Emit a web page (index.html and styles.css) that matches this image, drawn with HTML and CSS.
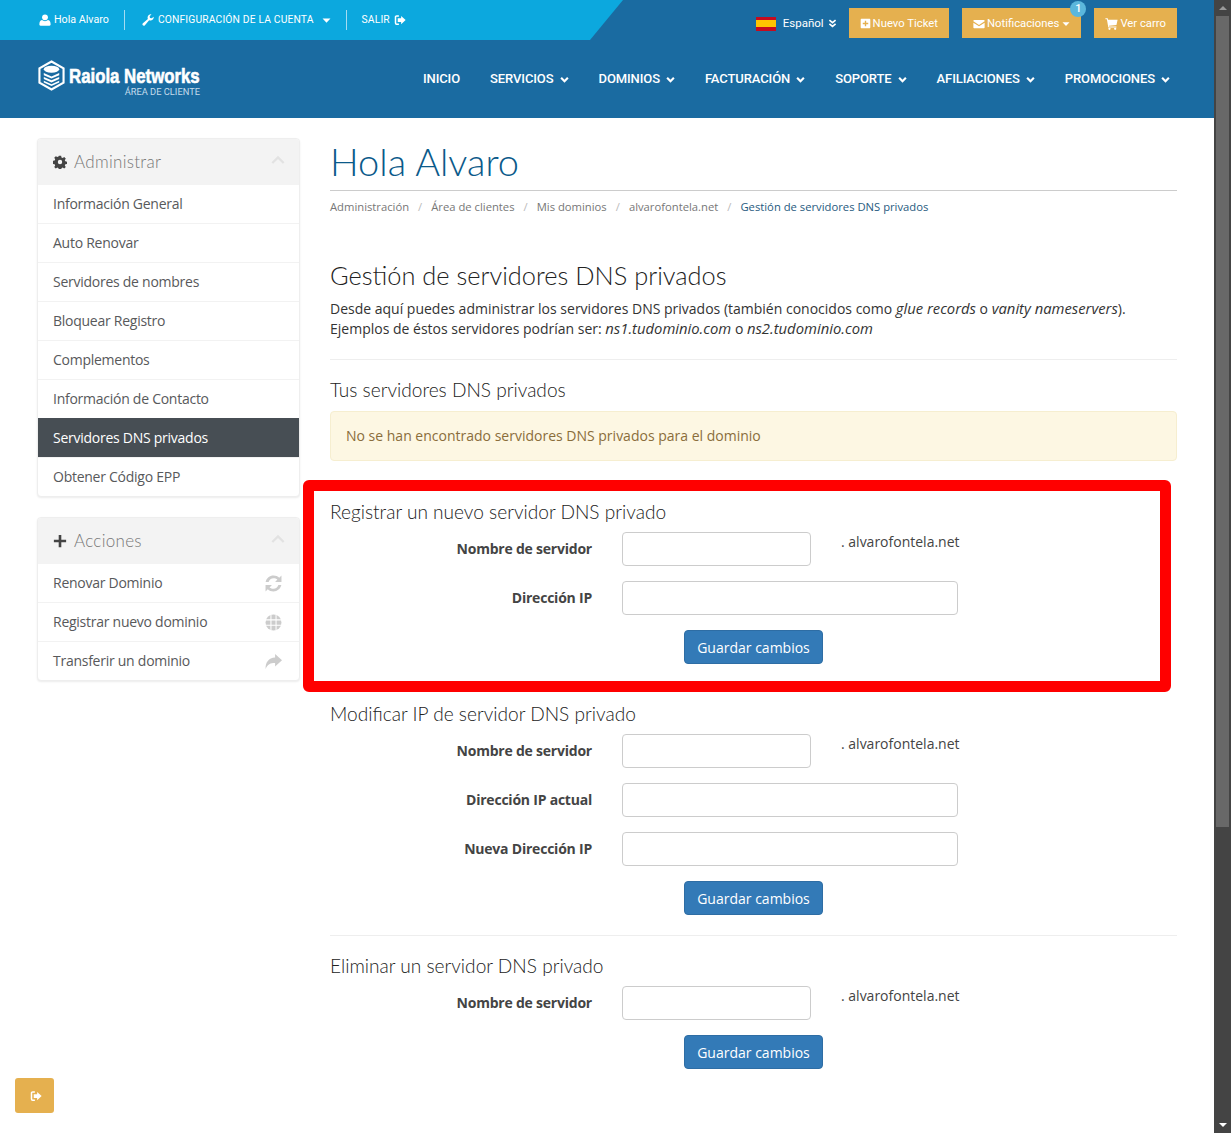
FILE: index.html
```html
<!DOCTYPE html>
<html lang="es">
<head>
    <meta charset="UTF-8">
    <meta name="viewport" content="width=device-width, initial-scale=1.0">
    <title>Gestión de servidores DNS privados</title>
    <link rel="stylesheet" href="styles.css">
</head>
<body>
    <svg class="icon-defs" aria-hidden="true">
        <symbol id="i-user" viewBox="0 0 16 16"><circle cx="8" cy="4.400" r="3.900"/><path d="M2 15.500c-1 0-1.500-.6-1.500-1.500 0-3 .8-6 3.500-6 1 1 2.500 1.500 4 1.500s3-.5 4-1.500c2.700 0 3.500 3 3.500 6 0 .9-.5 1.500-1.500 1.500z"/></symbol>
        <symbol id="i-wrench" viewBox="0 0 16 16"><path d="M15.600 3.700c.3 2.300-1.300 4.700-3.700 5-1 .1-1.700-.1-2.400-.4L3.900 14.900c-.8.900-2.100.9-2.800.1-.8-.8-.7-2 .1-2.800L7.800 6.600c-.3-.8-.4-1.600-.3-2.500C7.900 1.700 10.300 0 12.700.4l-2.500 2.500.4 2.400 2.400.4z"/></symbol>
        <symbol id="i-signout" viewBox="0 0 16 16"><path d="M6.500 2.500H3.500C2.700 2.500 2 3.200 2 4v8c0 .8.7 1.500 1.500 1.500h3" fill="none" stroke="currentColor" stroke-width="2"/><path d="M9.500 2.500 15.500 8l-6 5.500V10.500H5v-5h4.500z"/></symbol>
        <symbol id="i-chevron" viewBox="0 0 16 16"><path d="M2 5 8 11l6-6" fill="none" stroke="currentColor" stroke-width="3.800"/></symbol>
        <symbol id="i-double" viewBox="0 0 16 16"><path d="M2.500 2 8 6.500 13.500 2M2.500 8.500 8 13l5.500-4.500" fill="none" stroke="currentColor" stroke-width="3"/></symbol>
        <symbol id="i-caret" viewBox="0 0 16 16"><path d="M1 4.500h14L8 12z"/></symbol>
        <symbol id="i-plus-square" viewBox="0 0 16 16"><path fill-rule="evenodd" d="M2.500 1h11C14.400 1 15 1.600 15 2.500v11c0 .9-.6 1.500-1.500 1.500h-11C1.600 15 1 14.400 1 13.500v-11C1 1.600 1.600 1 2.500 1zM7 4v3H4v2h3v3h2V9h3V7H9V4z"/></symbol>
        <symbol id="i-envelope" viewBox="0 0 16 16"><path d="M1.500 2.500h13c.6 0 1 .4 1 1 0 .7-.4 1.200-1 1.600L8 9.300 1.500 5.100C.9 4.700.5 4.200.5 3.500c0-.6.4-1 1-1z"/><path d="M.5 6.300 8 11l7.500-4.700v6.200c0 .6-.4 1-1 1h-13c-.6 0-1-.4-1-1z"/></symbol>
        <symbol id="i-cart" viewBox="0 0 16 16"><path d="M.5 1.500h2.800l.5 1.800h11.700l-1.400 6.400-9.300 1 .3 1h9v1.300H4.100L2.300 2.800H.5z"/><circle cx="5.500" cy="14.500" r="1.400"/><circle cx="12.500" cy="14.500" r="1.400"/></symbol>
        <symbol id="i-cog" viewBox="0 0 16 16"><path fill-rule="evenodd" d="M6.700.8h2.600l.4 2 1.300.6 1.800-1.100 1.800 1.800-1.100 1.800.6 1.300 2 .4v2.600l-2 .4-.6 1.300 1.100 1.800-1.800 1.800-1.800-1.100-1.300.6-.4 2H6.700l-.4-2-1.300-.6-1.800 1.100-1.800-1.800 1.100-1.800-.6-1.300-2-.4V6.600l2-.4.6-1.300-1.100-1.800 1.800-1.800 1.800 1.100 1.300-.6zM8 5.500a2.500 2.500 0 1 0 0 5 2.500 2.500 0 0 0 0-5z"/></symbol>
        <symbol id="i-plus" viewBox="0 0 16 16"><path d="M6.500 1h3v5.500H15v3H9.500V15h-3V9.500H1v-3h5.500z"/></symbol>
        <symbol id="i-angle-up" viewBox="0 0 16 16"><path d="M1.500 11.500 8 5l6.500 6.500" fill="none" stroke="currentColor" stroke-width="2.600"/></symbol>
        <symbol id="i-refresh" viewBox="0 0 16 16"><path d="M15.500.5v6H9.500l2.200-2.200C10.700 3.400 9.400 3 8 3 5.800 3 4.100 4.400 3.400 6.500H.6C1.400 3 4.400.5 8 .5c2.100 0 4 .8 5.400 2.100z"/><path d="M.5 15.500v-6h6l-2.200 2.200c1 .9 2.300 1.300 3.700 1.300 2.200 0 3.900-1.400 4.600-3.500h2.800C14.600 13 11.600 15.500 8 15.500c-2.100 0-4-.8-5.400-2.100z"/></symbol>
        <symbol id="i-globe" viewBox="0 0 16 16"><circle cx="8" cy="8" r="7.500"/><path d="M5.600.8v14.400M10.400.8v14.400M.5 5.500h15M.5 10.500h15" fill="none" stroke="#fff" stroke-width="1"/></symbol>
        <symbol id="i-share" viewBox="0 0 16 16"><path d="M9.500 1 16 6.800l-6.500 5.800V9.400C5 9.400 2.500 10.500.6 15 .2 8.800 3.500 4.500 9.500 4.200z"/></symbol>
    </svg>

    <div class="window">
        <div class="page">
            <header class="site-header">
                <div class="top-row">
                    <div class="top-left">
                        <a class="top-link"><svg class="ico ico-user"><use href="#i-user"/></svg>Hola Alvaro</a>
                        <span class="top-sep"></span>
                        <a class="top-link caps"><svg class="ico ico-wrench"><use href="#i-wrench"/></svg>Configuración de la cuenta<svg class="ico ico-caret"><use href="#i-caret"/></svg></a>
                        <span class="top-sep"></span>
                        <a class="top-link caps">Salir<svg class="ico ico-after"><use href="#i-signout"/></svg></a>
                    </div>
                    <div class="top-right">
                        <span class="flag"></span>
                        <a class="lang">Español<svg class="ico"><use href="#i-double"/></svg></a>
                        <a class="top-btn"><svg class="ico btn-ico"><use href="#i-plus-square"/></svg>Nuevo Ticket</a>
                        <a class="top-btn has-badge"><svg class="ico btn-ico"><use href="#i-envelope"/></svg>Notificaciones<svg class="ico ico-xs"><use href="#i-caret"/></svg><span class="badge">1</span></a>
                        <a class="top-btn"><svg class="ico btn-ico btn-ico-cart"><use href="#i-cart"/></svg>Ver carro</a>
                    </div>
                </div>
                <div class="nav-row">
                    <a class="logo">
                        <svg class="logo-mark" viewBox="0 0 28 32">
                            <path d="M14 1.500 26.500 8.500v15L14 30.500 1.500 23.500v-15z" fill="none" stroke="#fff" stroke-width="2.200"/>
                            <ellipse cx="14" cy="9.500" rx="8" ry="3.600" fill="#fff"/>
                            <path d="M6 13.500 14 17l8-3.500v2.200L14 19.200 6 15.700zM6 17.500 14 21l8-3.500v2.200L14 23.200 6 19.700zM6 21.500 14 25l8-3.500v1.800L14 27 6 23.300z" fill="#fff"/>
                        </svg>
                        <span class="logo-text">
                            <span class="logo-name">Raiola Networks</span>
                            <span class="logo-sub">ÁREA DE CLIENTE</span>
                        </span>
                    </a>
                    <nav class="main-nav">
                        <a>Inicio</a>
                        <a>Servicios<svg class="ico ico-chev"><use href="#i-chevron"/></svg></a>
                        <a>Dominios<svg class="ico ico-chev"><use href="#i-chevron"/></svg></a>
                        <a>Facturación<svg class="ico ico-chev"><use href="#i-chevron"/></svg></a>
                        <a>Soporte<svg class="ico ico-chev"><use href="#i-chevron"/></svg></a>
                        <a>Afiliaciones<svg class="ico ico-chev"><use href="#i-chevron"/></svg></a>
                        <a>Promociones<svg class="ico ico-chev"><use href="#i-chevron"/></svg></a>
                    </nav>
                </div>
            </header>

            <div class="content">
                <aside class="sidebar">
                    <section class="panel">
                        <div class="panel-head">
                            <svg class="ico panel-ico"><use href="#i-cog"/></svg>
                            <span class="panel-title">Administrar</span>
                            <svg class="ico panel-toggle"><use href="#i-angle-up"/></svg>
                        </div>
                        <a class="panel-item">Información General</a>
                        <a class="panel-item">Auto Renovar</a>
                        <a class="panel-item">Servidores de nombres</a>
                        <a class="panel-item">Bloquear Registro</a>
                        <a class="panel-item">Complementos</a>
                        <a class="panel-item">Información de Contacto</a>
                        <a class="panel-item active">Servidores DNS privados</a>
                        <a class="panel-item">Obtener Código EPP</a>
                    </section>
                    <section class="panel">
                        <div class="panel-head">
                            <svg class="ico panel-ico"><use href="#i-plus"/></svg>
                            <span class="panel-title">Acciones</span>
                            <svg class="ico panel-toggle"><use href="#i-angle-up"/></svg>
                        </div>
                        <a class="panel-item">Renovar Dominio<svg class="ico item-ico"><use href="#i-refresh"/></svg></a>
                        <a class="panel-item">Registrar nuevo dominio<svg class="ico item-ico"><use href="#i-globe"/></svg></a>
                        <a class="panel-item">Transferir un dominio<svg class="ico item-ico"><use href="#i-share"/></svg></a>
                    </section>
                </aside>

                <main class="main">
                    <h1 class="page-title">Hola Alvaro</h1>
                    <ol class="breadcrumb">
                        <li>Administración</li>
                        <li>Área de clientes</li>
                        <li>Mis dominios</li>
                        <li>alvarofontela.net</li>
                        <li class="current">Gestión de servidores DNS privados</li>
                    </ol>

                    <h2 class="section-title">Gestión de servidores DNS privados</h2>
                    <p class="intro">Desde aquí puedes administrar los servidores DNS privados (también conocidos como <em>glue records</em> o <em>vanity nameservers</em>).<br>Ejemplos de éstos servidores podrían ser: <em>ns1.tudominio.com</em> o <em>ns2.tudominio.com</em></p>
                    <hr class="rule rule-intro">

                    <h3 class="sub-title">Tus servidores DNS privados</h3>
                    <div class="alert">No se han encontrado servidores DNS privados para el dominio</div>

                    <form class="dns-form form-register">
                        <h3 class="sub-title">Registrar un nuevo servidor DNS privado</h3>
                        <div class="form-row">
                            <label>Nombre de servidor</label>
                            <input class="input-short" type="text">
                            <span class="domain">. alvarofontela.net</span>
                        </div>
                        <div class="form-row">
                            <label>Dirección IP</label>
                            <input class="input-long" type="text">
                        </div>
                        <div class="form-actions"><button type="button">Guardar cambios</button></div>
                        <div class="highlight"></div>
                    </form>

                    <form class="dns-form form-modify">
                        <h3 class="sub-title">Modificar IP de servidor DNS privado</h3>
                        <div class="form-row">
                            <label>Nombre de servidor</label>
                            <input class="input-short" type="text">
                            <span class="domain">. alvarofontela.net</span>
                        </div>
                        <div class="form-row">
                            <label>Dirección IP actual</label>
                            <input class="input-long" type="text">
                        </div>
                        <div class="form-row">
                            <label>Nueva Dirección IP</label>
                            <input class="input-long" type="text">
                        </div>
                        <div class="form-actions"><button type="button">Guardar cambios</button></div>
                    </form>
                    <hr class="rule rule-forms">

                    <form class="dns-form">
                        <h3 class="sub-title">Eliminar un servidor DNS privado</h3>
                        <div class="form-row">
                            <label>Nombre de servidor</label>
                            <input class="input-short" type="text">
                            <span class="domain">. alvarofontela.net</span>
                        </div>
                        <div class="form-actions"><button type="button">Guardar cambios</button></div>
                    </form>
                </main>
            </div>

            <a class="float-btn"><svg class="ico"><use href="#i-signout"/></svg></a>
        </div>

        <div class="scrollbar">
            <span class="arrow-up"></span>
            <div class="track"><div class="thumb"></div></div>
            <span class="arrow-down"></span>
        </div>
    </div>
</body>
</html>
```

FILE: styles.css
```css
* { box-sizing: border-box; }
html, body { margin: 0; height: 100%; overflow: hidden; }
body { font-family: "Open Sans", sans-serif; font-size: 14px; line-height: 20px; color: #333; background: #fff; }
a { color: inherit; text-decoration: none; }
.icon-defs { display: none; }

.window { display: flex; height: 1133px; }
.page { flex: 1; min-width: 0; position: relative; overflow: hidden; }

/* icons */
.ico { display: inline-block; fill: currentColor; flex: none; }
.ico-xs { width: 8px; height: 8px; margin-left: 3px; }
.ico-user { width: 12px; height: 12px; margin-right: 3px; }
.ico-wrench { width: 12px; height: 12px; margin: 0 4px 0 2px; }
.ico-after { width: 12px; height: 12px; margin-left: 4px; }
.ico-caret { width: 9px; height: 9px; margin-left: 8px; }
.ico-chev { width: 9px; height: 9px; margin-left: 6px; }

/* header */
.site-header { background: #1a6ba1; color: #fff; height: 118px; }
.top-row { display: flex; height: 40px; justify-content: space-between; }
.top-left { width: 623px; background: #0ca8de; clip-path: polygon(0 0, 100% 0, 590px 100%, 0 100%); display: flex; align-items: center; padding-left: 39px; font-family: Roboto, sans-serif; font-size: 10.700px; }
.top-link { display: flex; align-items: center; }
.top-link.caps { text-transform: uppercase; font-size: 10.300px; letter-spacing: .15px; }
.top-sep { width: 1px; height: 20px; background: #a5dcf2; margin: 0 15px; }
.top-right { display: flex; align-items: flex-start; padding: 8px 37px 0 0; font-family: Roboto, sans-serif; font-size: 11.300px; }
.flag { width: 20px; height: 14px; margin: 9px 7px 0 0; background: linear-gradient(#c60b1e 0 25%, #ffc400 25% 75%, #c60b1e 75%); }
.lang { display: flex; align-items: center; height: 30px; margin-right: 12px; font-size: 11.500px; }
.lang .ico { width: 9px; height: 11px; margin-left: 4px; }
.top-btn { display: flex; align-items: center; height: 30px; padding: 1px 11px 0; margin-left: 13px; background: #e5b04f; }
.btn-ico { width: 11px; height: 11px; margin-right: 2px; }
.btn-ico-cart { width: 13px; height: 13px; margin-right: 2px; }
.lang + .top-btn { margin-left: 0; }
.has-badge { position: relative; }
.has-badge .btn-ico { width: 12px; height: 12px; }
.badge { position: absolute; top: -7px; right: -5px; width: 16px; height: 16px; border-radius: 50%; background: #5bb7dc; font-size: 11px; font-weight: 500; line-height: 16px; text-align: center; }

.nav-row { display: flex; justify-content: space-between; height: 78px; padding: 0 44px 0 38px; }
.logo { display: flex; align-items: flex-start; padding-top: 20px; }
.logo-mark { width: 27px; height: 31px; margin-right: 4px; }
.logo-text { display: flex; flex-direction: column; align-items: flex-end; width: 131px; }
.logo-name { display: block; width: 131px; white-space: nowrap; font-family: "Liberation Sans", sans-serif; font-size: 20px; font-weight: 700; line-height: 24px; margin-top: 4px; -webkit-text-stroke: .6px #fff; transform: scaleX(.84); transform-origin: left center; }
.logo-sub { font-family: Roboto, sans-serif; font-size: 9.300px; line-height: 10px; color: #c4dcec; margin-top: -1px; }
.main-nav { display: flex; gap: 30px; align-items: center; height: 78px; font-family: Roboto, sans-serif; font-size: 13px; font-weight: 500; text-transform: uppercase; }
.main-nav a { display: flex; align-items: center; letter-spacing: -.1px; }

/* layout */
.content { display: flex; align-items: flex-start; padding: 20px 37px 0; gap: 30px; }
.sidebar { width: 263px; flex: none; display: flex; flex-direction: column; gap: 20px; }
.main { flex: 1; min-width: 0; }

/* sidebar */
.panel { border: 1px solid #eee; border-radius: 4px; box-shadow: 0 1px 2px rgba(0, 0, 0, .08); background: #fff; overflow: hidden; }
.panel-head { display: flex; align-items: center; height: 46px; padding: 0 14px 0 15px; background: #f3f3f3; color: #777; }
.panel-ico { width: 14px; height: 14px; fill: #444; color: #444; margin-right: 7px; }
.panel-title { flex: 1; font-family: Lato, sans-serif; font-weight: 300; font-size: 17px; letter-spacing: .3px; }
.panel-toggle { width: 14px; height: 14px; color: #e2e2e2; margin: -5px 0 0; }
.panel-item { display: flex; align-items: center; justify-content: space-between; height: 39px; padding: 0 17px 0 15px; border-top: 1px solid #f2f2f2; color: #58595b; font-size: 14px; letter-spacing: -.26px; }
.panel-head + .panel-item { border-top: 0; height: 38px; }
.panel-item.active { background: #474e54; color: #fff; border-top-color: #474e54; }
.item-ico { width: 17px; height: 17px; fill: #ccc; color: #ccc; }

/* main column */
.page-title { margin: 4px 0 0; padding-bottom: 9px; border-bottom: 1px solid #ccc; font-family: Lato, sans-serif; font-weight: 300; font-size: 38px; line-height: 39px; color: #0b5a8a; }
.breadcrumb { display: flex; list-style: none; margin: 0; padding: 6px 0 0; font-size: 11.250px; line-height: 20px; color: #777; }
.breadcrumb li:not(:last-child)::after { content: "/"; margin: 0 9px; color: #bbb; }
.breadcrumb .current { color: #1f5a80; }
.section-title { margin: 44px 0 0; font-family: Lato, sans-serif; font-weight: 300; font-size: 25.400px; line-height: 28px; color: #222; }
.intro { margin: 10px 0 0; }
.intro em { font-size: 14.800px; line-height: 1; }
.rule { border: 0; border-top: 1px solid #eee; margin: 0; }
.rule-intro { margin-top: 20px; }
.rule-forms { margin-top: 20px; }
.sub-title { margin: 0; font-family: Lato, sans-serif; font-weight: 300; font-size: 19.100px; line-height: 20px; color: #222; }
.rule-intro + .sub-title { margin-top: 20px; }
.alert { margin-top: 11px; height: 50px; display: flex; align-items: center; padding: 0 15px; background: #fdf7e3; border: 1px solid #f6eed0; border-radius: 4px; color: #8a6d3b; }

/* forms */
.dns-form { position: relative; margin-top: 20px; }
.form-register { margin-top: 45px; }
.form-register .sub-title { margin: -4px 0 4px; }
.form-modify { margin-top: 40px; }
.rule-forms + .dns-form { margin-top: 20px; }
.form-row { display: flex; align-items: flex-start; margin-top: 15px; }
.sub-title + .form-row { margin-top: 10px; }
.form-row label { width: 262px; margin-right: 30px; padding-top: 7px; text-align: right; font-weight: 700; color: #444; letter-spacing: -.22px; }
.form-row input { height: 34px; border: 1px solid #ccc; border-radius: 4px; background: #fff; }
.input-short { width: 189px; }
.input-long { width: 336px; }
.domain { margin-left: 30px; color: #444; }
.form-actions { margin-top: 15px; padding-left: 354px; }
.form-actions button { width: 139px; height: 34px; border: 1px solid #2e6da4; border-radius: 4px; background: #337ab7; color: #fff; font-family: "Open Sans", sans-serif; font-size: 14px; }
.highlight { position: absolute; top: -22px; bottom: -28px; left: -27px; width: 868px; border: 11px solid #f00; border-radius: 6px; pointer-events: none; }

.float-btn { position: absolute; left: 15px; bottom: 20px; width: 39px; height: 35px; display: flex; align-items: center; justify-content: center; padding: 0 0 0 3px; background: #e5b04f; border-radius: 3px; color: #fff; }
.float-btn .ico { width: 12px; height: 12px; }

/* scrollbar */
.scrollbar { width: 17px; flex: none; display: flex; flex-direction: column; align-items: center; background: #444; }
.track { flex: 1; width: 100%; padding: 0 2px; }
.thumb { height: 811px; background: #686868; }
.arrow-up, .arrow-down { width: 0; height: 0; margin: 6px 0; border-left: 4px solid transparent; border-right: 4px solid transparent; }
.arrow-up { border-bottom: 4px solid #999; }
.arrow-down { border-top: 4px solid #fff; }
```
